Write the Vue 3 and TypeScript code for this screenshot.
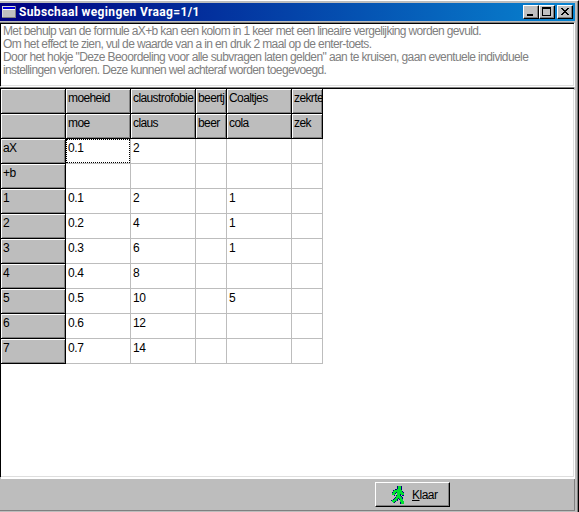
<script setup lang="ts">
const intro: string[] = [
  'Met behulp van de formule aX+b kan een kolom in 1 keer met een lineaire vergelijking worden gevuld.',
  'Om het effect te zien, vul de waarde van a in en druk 2 maal op de enter-toets.',
  'Door het hokje "Deze Beoordeling voor alle subvragen laten gelden" aan te kruisen, gaan eventuele individuele',
  'instellingen verloren. Deze kunnen wel achteraf worden toegevoegd.',
]

const heads: string[][] = [
  ['', 'moeheid', 'claustrofobie', 'beertj', 'Coaltjes', 'zekrte'],
  ['', 'moe', 'claus', 'beer', 'cola', 'zek'],
]

const rows: string[][] = [
  ['aX', '0.1', '2', '', '', ''],
  ['+b', '', '', '', '', ''],
  ['1', '0.1', '2', '', '1', ''],
  ['2', '0.2', '4', '', '1', ''],
  ['3', '0.3', '6', '', '1', ''],
  ['4', '0.4', '8', '', '', ''],
  ['5', '0.5', '10', '', '5', ''],
  ['6', '0.6', '12', '', '', ''],
  ['7', '0.7', '14', '', '', ''],
]

const walker = 'M8 5L7.5 11M7 5.5L4 6.5L2 10M9 5.5L11 8.5L13 9M7 11L5 14.5L1.5 17M8 11L10 13.5L11 17.5L13 17.5'
</script>

<template>
  <div class="window">
    <header class="titlebar">
      <svg class="app-icon" width="14" height="12" viewBox="0 0 14 12" shape-rendering="crispEdges">
        <rect width="14" height="12" fill="#808080" />
        <rect width="13" height="11" fill="#d8d8d8" />
        <rect x="1" y="1" width="12" height="10" fill="#c0c0c0" />
        <rect x="1" y="1" width="12" height="2" fill="#0000e0" />
        <rect x="1" y="3" width="12" height="1" fill="#fff" />
      </svg>
      <h1 class="caption">Subschaal wegingen Vraag=1/1</h1>
      <div class="controls">
        <button class="ctl" aria-label="Minimize">
          <svg width="12" height="10" shape-rendering="crispEdges"><rect x="2" y="7" width="6" height="2" /></svg>
        </button>
        <button class="ctl" aria-label="Maximize">
          <svg width="12" height="10" shape-rendering="crispEdges">
            <path d="M1 0h9v9h-9zM2 2v6h7v-6z" fill-rule="evenodd" />
          </svg>
        </button>
        <button class="ctl close" aria-label="Close">
          <svg width="12" height="10" shape-rendering="crispEdges">
            <path d="M2 1h2v1h1v1h2v-1h1v-1h2v1h-1v1h-1v1h-1v1h1v1h1v1h1v1h-2v-1h-1v-1h-2v1h-1v1h-2v-1h1v-1h1v-1h1v-1h-1v-1h-1v-1h-1z" />
          </svg>
        </button>
      </div>
    </header>

    <section class="memo">
      <p v-for="(line, i) in intro" :key="i" :class="'line' + i">{{ line }}</p>
    </section>

    <section class="grid-pane">
      <div class="grid">
        <template v-for="(row, r) in heads" :key="'h' + r">
          <div v-for="(cell, c) in row" :key="c" class="cell fixed">{{ cell }}</div>
        </template>
        <template v-for="(row, r) in rows" :key="'r' + r">
          <div
            v-for="(cell, c) in row"
            :key="c"
            class="cell"
            :class="{ fixed: c === 0, focused: r === 0 && c === 1 }"
          >{{ cell }}</div>
        </template>
      </div>
    </section>

    <footer class="bar">
      <button class="done">
        <svg width="15" height="20" viewBox="0 0 15 20" shape-rendering="crispEdges" fill="none">
          <path :d="walker" stroke="#000080" stroke-width="3.8" />
          <rect x="6" y="1" width="5" height="5" fill="#000080" />
          <path :d="walker" stroke="#00e030" stroke-width="2.6" />
          <rect x="7" y="1" width="3" height="4" fill="#00e030" />
        </svg>
        <span class="label"><u>K</u>laar</span>
      </button>
    </footer>
  </div>
</template>

<style>
body {
  overflow: hidden;
  background: #fff;
}
</style>

<style scoped>
.window {
  box-sizing: border-box;
  width: 579px;
  height: 512px;
  display: flex;
  flex-direction: column;
  background: #bdbdbd;
  border-top: 1px solid #fff;
  border-right: 1px solid #000;
  box-shadow: inset -1px 0 #808080;
  padding: 2px 4px 0 0;
  font: 12px/14px 'Liberation Sans', Arial, sans-serif;
  letter-spacing: -0.4px;
  color: #000;
}
.titlebar {
  height: 18px;
  margin-right: -1px;
  display: flex;
  align-items: flex-start;
  background: linear-gradient(90deg, #000080, #0884d0);
  flex: none;
}
.app-icon {
  margin: 3px 0 0 2px;
}
.caption {
  margin: 2px 0 0 3px;
  font: 700 12px/14px Roboto, 'Liberation Sans', sans-serif;
  letter-spacing: 0.36px;
  color: #fff;
  white-space: nowrap;
}
.controls {
  display: flex;
  margin: 2px 2px 0 auto;
}
.ctl {
  box-sizing: border-box;
  width: 16px;
  height: 14px;
  padding: 1px;
  display: flex;
  background: #c0c0c0;
  border: 1px solid;
  border-color: #fff #000 #000 #fff;
  box-shadow: inset -1px -1px #808080;
}
.ctl.close {
  margin-left: 2px;
}
.memo {
  box-sizing: border-box;
  height: 63px;
  margin-top: 2px;
  background: #fff;
  border-top: 1px solid #000;
  border-left: 1px solid #000;
  box-shadow: inset -1px -1px #dedede, 0 -1px #808080, 1px 0 #fff, 1px 1px #fff;
  padding: 1px 0 0 2px;
  color: #808080;
  line-height: 13px;
  white-space: pre;
  flex: none;
}
.memo p {
  margin: 0;
  letter-spacing: -0.62px;
}
.memo .line0 {
  letter-spacing: -0.64px;
}
.memo .line2 {
  letter-spacing: -0.59px;
}
.grid-pane {
  box-sizing: border-box;
  height: 389px;
  margin-top: 2px;
  flex: none;
  background: #fff;
  border-top: 1px solid #000;
  border-left: 1px solid #000;
  box-shadow: inset -1px -1px #dedede, 0 -1px #808080, 1px 2px #fff;
}
.grid {
  display: grid;
  grid-template-columns: 65px 65px 65px 31px 65px 31px;
  grid-auto-rows: 25px;
  width: 322px;
}
.cell {
  box-sizing: border-box;
  overflow: hidden;
  padding: 2px 0 0 2px;
  white-space: nowrap;
  border-right: 1px solid #bdbdbd;
  border-bottom: 1px solid #bdbdbd;
}
.cell.fixed {
  background: #bdbdbd;
  border-color: #000;
  box-shadow: inset 1px 1px #fff, inset -1px -1px #808080;
  letter-spacing: -0.6px;
}
.cell.focused {
  position: relative;
}
.cell.focused::after {
  content: '';
  position: absolute;
  inset: 0;
  border: 1px dotted #000;
}
.bar {
  height: 31px;
  margin: 2px -1px 0 0;
  display: flex;
  border-right: 1px solid #808080;
  border-bottom: 1px solid #808080;
}
.done {
  box-sizing: border-box;
  width: 75px;
  height: 25px;
  margin: 3px 0 0 375px;
  padding: 2px 0 0 15px;
  display: flex;
  font: inherit;
  letter-spacing: -0.5px;
  color: #000;
  background: #bdbdbd;
  border: 1px solid;
  border-color: #fff #000 #000 #fff;
  box-shadow: inset -1px -1px #808080;
}
.label {
  margin: 3px 0 0 6px;
}
</style>
